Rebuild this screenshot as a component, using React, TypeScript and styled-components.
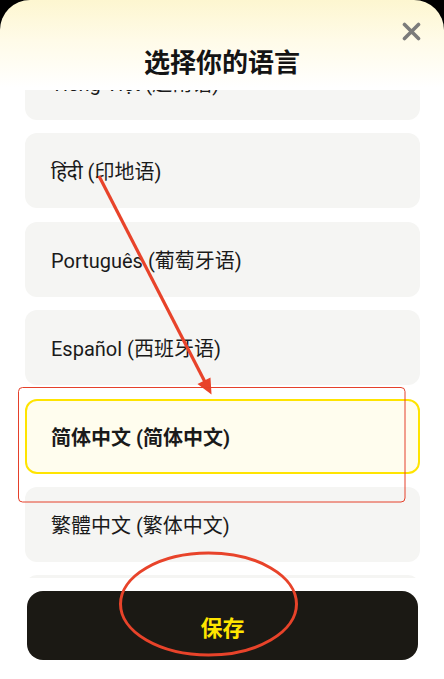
import React, { useLayoutEffect, useRef, useState } from "react";
import styled, { createGlobalStyle } from "styled-components";

const GlobalStyle = createGlobalStyle`
  html, body {
    margin: 0;
    padding: 0;
    background: #000;
  }
  body {
    font-family: Roboto, "Noto Sans", "Noto Sans CJK SC", sans-serif;
  }
`;

const Page = styled.div`
  position: relative;
  width: 444px;
  height: 679px;
  overflow: hidden;
`;

const Sheet = styled.div`
  height: 100%;
  display: flex;
  flex-direction: column;
  border-radius: 30px 30px 0 0;
  background: linear-gradient(180deg, #fdf6d0 0px, #fffbe8 40px, #ffffff 88px);
`;

const Header = styled.div`
  position: relative;
  height: 90px;
  flex: none;
  display: flex;
  align-items: flex-end;
  justify-content: center;
  padding-bottom: 12px;
  box-sizing: border-box;
`;

const Title = styled.h1`
  margin: 0;
  font-family: "Noto Sans CJK SC", sans-serif;
  font-size: 26px;
  font-weight: 700;
  line-height: 34px;
  color: #141414;
`;

const CloseButton = styled.button`
  position: absolute;
  top: 21px;
  right: 23px;
  width: 20px;
  height: 20px;
  padding: 0;
  border: none;
  background: none;
  display: flex;
  align-items: center;
  justify-content: center;
`;

const List = styled.div`
  height: 488px;
  flex: none;
  overflow-y: auto;
  padding: 0 24px 0 25px;
  scrollbar-width: none;
  &::-webkit-scrollbar {
    display: none;
  }
`;

const Item = styled.div<{ $selected?: boolean }>`
  height: 75px;
  box-sizing: border-box;
  margin-bottom: 13.4px;
  display: flex;
  align-items: center;
  padding-left: ${(p) => (p.$selected ? "24px" : "26px")};
  border-radius: 12px;
  background: ${(p) => (p.$selected ? "#fffdee" : "#f5f5f3")};
  border: ${(p) => (p.$selected ? "2px solid #ffe400" : "none")};
  font-size: 20px;
  font-weight: ${(p) => (p.$selected ? 700 : 400)};
  color: #1a1a1a;
  font-family: Roboto, "Noto Sans", "Noto Sans Devanagari", "Noto Sans CJK SC", sans-serif;
`;

const Footer = styled.div`
  flex: none;
  padding: 13px 26px 0 27px;
`;

const SaveButton = styled.button`
  width: 100%;
  height: 69px;
  border: none;
  border-radius: 16px;
  background: #1b1914;
  color: #ffe500;
  font-family: "Noto Sans CJK SC", sans-serif;
  font-size: 22px;
  font-weight: 700;
`;

const Annotations = styled.svg`
  position: absolute;
  left: 0;
  top: 0;
  pointer-events: none;
`;

const languages = [
  "Tiếng Việt (越南语)",
  "हिंदी (印地语)",
  "Português (葡萄牙语)",
  "Español (西班牙语)",
  "简体中文 (简体中文)",
  "繁體中文 (繁体中文)",
  "English (英语)",
];

const App: React.FC = () => {
  const [selected, setSelected] = useState("简体中文 (简体中文)");
  const listRef = useRef<HTMLDivElement>(null);

  useLayoutEffect(() => {
    if (listRef.current) listRef.current.scrollTop = 45;
  }, []);

  return (
    <Page>
      <GlobalStyle />
      <Sheet>
        <Header>
          <Title>选择你的语言</Title>
          <CloseButton aria-label="close">
            <svg width="19" height="19" viewBox="0 0 19 19">
              <path d="M2.5 2.5 L16.5 16.5 M16.5 2.5 L2.5 16.5" stroke="#7b7b7b" strokeWidth="3.6" strokeLinecap="round" />
            </svg>
          </CloseButton>
        </Header>
        <List ref={listRef}>
          {languages.map((lang) => (
            <Item key={lang} $selected={lang === selected} onClick={() => setSelected(lang)}>
              {lang}
            </Item>
          ))}
        </List>
        <Footer>
          <SaveButton>保存</SaveButton>
        </Footer>
      </Sheet>

      {/* red markup drawn over the screenshot */}
      <Annotations width="444" height="679" viewBox="0 0 444 679">
        <line x1="99" y1="176" x2="205" y2="382" stroke="#e8432a" strokeWidth="3.2" />
        <polygon points="211.5,394.5 197.5,384 210.5,377.5" fill="#e8432a" />
        <rect x="18.5" y="387.5" width="386.5" height="114.5" rx="4" fill="none" stroke="#e5402a" strokeWidth="1" />
        <ellipse cx="208.5" cy="604" rx="88" ry="51" fill="none" stroke="#e8432a" strokeWidth="3" />
      </Annotations>
    </Page>
  );
};

export default App;
